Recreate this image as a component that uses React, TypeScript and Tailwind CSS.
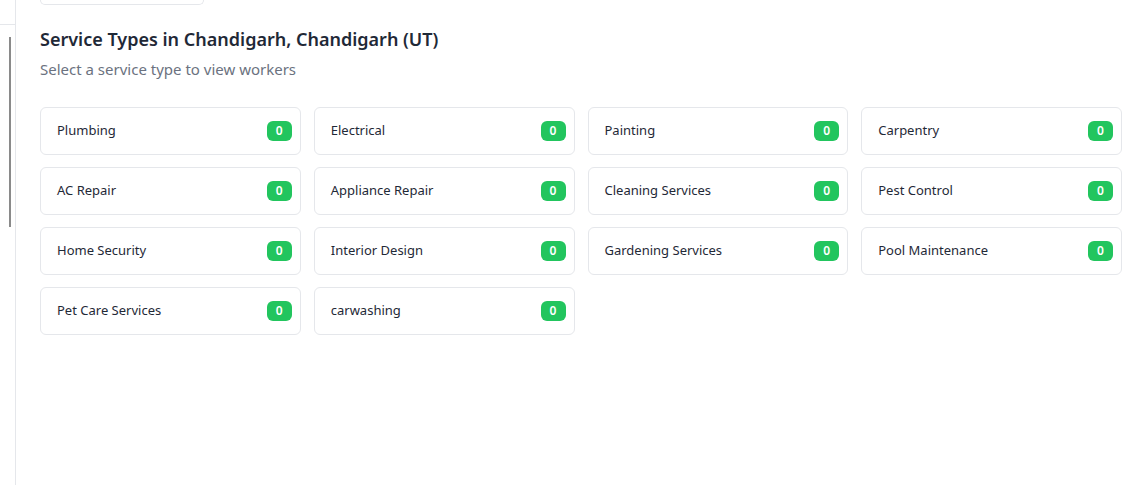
import React from "react"

const services = [
    "Plumbing",
    "Electrical",
    "Painting",
    "Carpentry",
    "AC Repair",
    "Appliance Repair",
    "Cleaning Services",
    "Pest Control",
    "Home Security",
    "Interior Design",
    "Gardening Services",
    "Pool Maintenance",
    "Pet Care Services",
    "carwashing",
]

export default function App() {
    return (
        <div className="flex h-[485px] w-[1122px] overflow-hidden bg-white" style={{ fontFamily: "'Noto Sans', 'Open Sans', sans-serif" }}>
            {/* sidebar edge */}
            <div className="flex w-[16px] shrink-0 flex-col border-r border-gray-200">
                <div className="h-[25px] border-b border-gray-200" />
                <div className="ml-[9px] mt-[12px] h-[190px] w-[2px] bg-[#8a8a8a]" />
            </div>

            <div className="flex w-[1106px] shrink-0 flex-col pl-6">
                <div className="h-[5px] w-[164px] rounded-b-lg border border-t-0 border-gray-200" />

                <h2 className="mt-[20px] text-[18px] font-semibold leading-7 text-[#1f2937]">
                    Service Types in Chandigarh, Chandigarh (UT)
                </h2>
                <p className="mt-[4px] text-[15px] leading-6 text-[#6b7280]">Select a service type to view workers</p>

                <div className="mt-[26px] grid grid-cols-4 gap-x-[13px] gap-y-3">
                    {services.map((name) => (
                        <div
                            key={name}
                            className="flex h-12 items-center justify-between rounded-md border border-gray-200 bg-white pl-4 pr-2"
                        >
                            <span className="text-[13px] text-[#1f2937]">{name}</span>
                            <span className="flex h-5 w-[25px] items-center justify-center rounded-md bg-[#22c55e] text-xs font-semibold text-white">
                                0
                            </span>
                        </div>
                    ))}
                </div>
            </div>
        </div>
    )
}
